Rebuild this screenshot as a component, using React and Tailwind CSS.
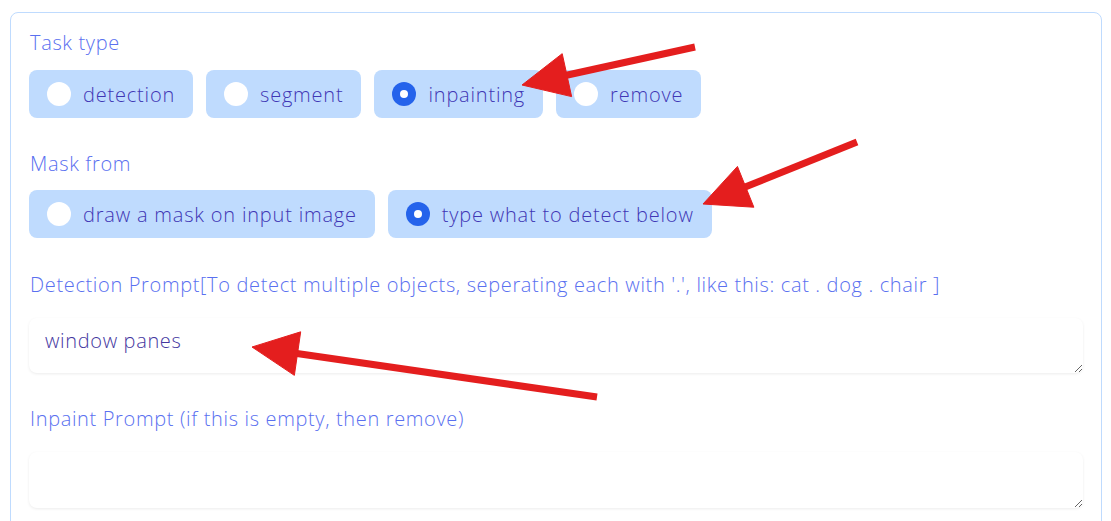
import { useState } from "react";

const font = { fontFamily: "'Open Sans', 'Noto Sans', sans-serif", letterSpacing: "0.65px" };

function Radio({ label, checked, onClick }) {
  return (
    <button
      onClick={onClick}
      className="flex items-center gap-3 h-12 pl-[18px] pr-[18px] rounded-lg bg-[#bfdbfe] text-[20px] font-light text-[#3f37b5] tracking-[0.8px]"
    >
      <span
        className={
          checked
            ? "w-6 h-6 rounded-full bg-[#2563eb] grid place-items-center"
            : "w-6 h-6 rounded-full bg-white"
        }
      >
        {checked && <span className="w-2 h-2 rounded-full bg-white" />}
      </span>
      <span className="leading-7 pt-[2px]">{label}</span>
    </button>
  );
}

function Arrow({ x1, y1, x2, y2 }) {
  // shaft from tail (x1,y1) to tip (x2,y2), head drawn as a triangle
  const dx = x2 - x1, dy = y2 - y1;
  const len = Math.hypot(dx, dy);
  const ux = dx / len, uy = dy / len;
  const hl = 46, hw = 22;
  const bx = x2 - ux * hl, by = y2 - uy * hl;
  const px = -uy, py = ux;
  const pts = `${x2},${y2} ${bx + px * hw},${by + py * hw} ${bx - px * hw},${by - py * hw}`;
  return (
    <g fill="#e41e1e" stroke="#e41e1e">
      <line x1={x1} y1={y1} x2={bx + ux * 4} y2={by + uy * 4} strokeWidth="7" />
      <polygon points={pts} strokeWidth="1" strokeLinejoin="round" />
    </g>
  );
}

export default function App() {
  const [task, setTask] = useState("inpainting");
  const [mask, setMask] = useState("type");
  const [det, setDet] = useState("window panes");
  const [inp, setInp] = useState("");

  return (
    <div className="relative w-[1111px] h-[521px] bg-white overflow-hidden" style={font}>
      <div className="ml-[10px] mt-3 w-[1092px] h-[520px] border border-[#bfdbfe] rounded-lg pl-[18px] pr-[18px] pt-4 flex flex-col">
        <div className="text-[20px] font-light leading-7 text-[#5a70f0] pl-[1px]">Task type</div>
        <div className="mt-[13px] flex gap-[13px]">
          {["detection", "segment", "inpainting", "remove"].map((t) => (
            <Radio key={t} label={t} checked={task === t} onClick={() => setTask(t)} />
          ))}
        </div>

        <div className="mt-[32px] text-[20px] font-light leading-7 text-[#5a70f0] pl-[1px]">Mask from</div>
        <div className="mt-[12px] flex gap-[13px]">
          <Radio label="draw a mask on input image" checked={mask === "draw"} onClick={() => setMask("draw")} />
          <Radio label="type what to detect below" checked={mask === "type"} onClick={() => setMask("type")} />
        </div>

        <div className="mt-[33px] text-[20px] font-light leading-7 text-[#5a70f0] pl-[1px]">
          Detection Prompt[To detect multiple objects, seperating each with '.', like this: cat . dog . chair ]
        </div>
        <textarea
          value={det}
          onChange={(e) => setDet(e.target.value)}
          className="mt-[19px] w-[1054px] h-[55px] rounded-lg bg-white shadow-[0_1px_3px_rgba(0,0,0,0.08)] px-4 pt-[9px] text-[20px] font-light leading-7 text-[#45379f] outline-none"
          style={font}
        />

        <div className="mt-[32px] text-[20px] font-light leading-7 text-[#5a70f0] pl-[1px]">
          Inpaint Prompt (if this is empty, then remove)
        </div>
        <textarea
          value={inp}
          onChange={(e) => setInp(e.target.value)}
          className="mt-[19px] w-[1054px] h-[56px] rounded-lg bg-white shadow-[0_1px_3px_rgba(0,0,0,0.08)] px-4 pt-[9px] text-[20px] font-light leading-7 text-[#45379f] outline-none"
          style={font}
        />
      </div>

      <svg className="absolute inset-0 pointer-events-none" width="1111" height="521">
        <Arrow x1={695} y1={47} x2={522} y2={85} />
        <Arrow x1={857} y1={142} x2={703} y2={204} />
        <Arrow x1={597} y1={397} x2={252} y2={347} />
      </svg>
    </div>
  );
}
